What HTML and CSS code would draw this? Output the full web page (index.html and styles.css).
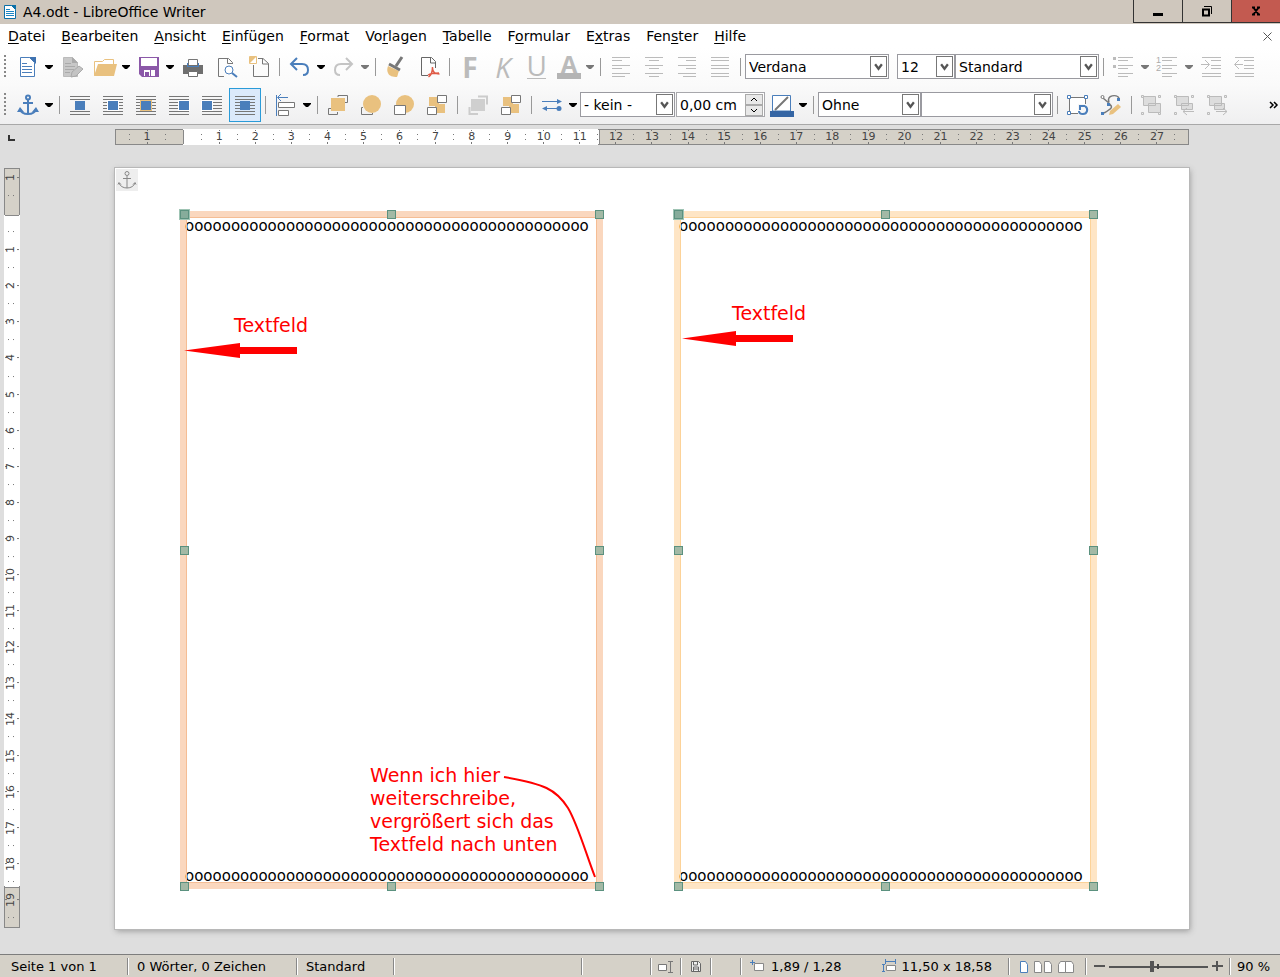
FILE: index.html
```html
<!DOCTYPE html>
<html lang="de">
<head>
	<meta charset="utf-8">
	<title>A4.odt - LibreOffice Writer</title>
	<link rel="stylesheet" href="styles.css">
</head>
<body>
	<!-- shared icons -->
	<svg class="sprite" aria-hidden="true">
		<symbol id="i-drop" viewBox="0 0 11 8"><path d="M1 2h8v1L6 6H4L1 3z" fill="currentColor"/></symbol>
		<symbol id="i-chevron" viewBox="0 0 8 8"><path d="M1 2l3 4 3-4" fill="none" stroke="#555" stroke-width="2"/></symbol>
		<symbol id="i-anchor" viewBox="0 0 24 24"><g fill="none" stroke="currentColor" stroke-width="2"><circle cx="12" cy="4.500" r="2"/><path d="M12 7v14M7 10h10M4 16c1 4 4 5 8 5s7-1 8-5"/></g><path d="M1 19l3-5 4 5zM16 19l4-5 3 5z" fill="currentColor"/></symbol>
		<symbol id="i-anchor-thin" viewBox="0 0 22 22"><g fill="none" stroke="currentColor"><circle cx="11" cy="4.500" r="2"/><path d="M11 7v12M7 9.500h8M3 14c1 3 4 5 8 5s7-2 8-5M2 15.500l1-2 2 2M20 15.500l-1-2-2 2"/></g></symbol>
		<symbol id="i-doc" viewBox="0 0 24 24"><path d="M4.500 2.500h9l5 5v14h-14z" fill="#fff" stroke="#4a7ebb"/><path d="M13 2h7v7z" fill="#3f72b0"/><path d="M6 8.500h5M6 11.500h10M6 14.500h10M6 17.500h10" stroke="#4a7ebb"/></symbol>
		<symbol id="i-lines" viewBox="0 0 24 24"><path d="M2 3.500h20M2 6.500h20M2 9.500h20M2 12.500h20M2 15.500h20M2 18.500h20M2 21.500h20" stroke="#777"/></symbol>
	</svg>

	<header class="titlebar">
		<svg width="14" height="16" viewBox="0 0 14 16"><path d="M1.500 1.500h7l4 4v9h-11z" fill="#fff" stroke="#0b70a8"/><path d="M8 1h5v5z" fill="#0b70a8"/><path d="M3 5.500h4M3 7.500h8M3 9.500h8M3 11.500h8" stroke="#1b86c4"/></svg>
		<h1>A4.odt - LibreOffice Writer</h1>
		<div class="win-buttons">
			<button aria-label="Minimieren"><svg width="12" height="12"><path d="M1 8h10v3H1z"/></svg></button>
			<button aria-label="Wiederherstellen"><svg width="12" height="12"><path d="M2 4.500h6v6H2z" fill="none" stroke="#000" stroke-width="2"/><path d="M3 1.500h7.500V9" fill="none" stroke="#000"/></svg></button>
			<button class="close" aria-label="Schließen"><svg width="12" height="12"><path d="M3 2l6 8M9 2l-6 8M2 2.500h3M7 2.500h3M2 9.500h3M7 9.500h3" stroke="#000" stroke-width="2"/></svg></button>
		</div>
	</header>

	<nav class="menubar">
		<a href="#"><u>D</u>atei</a>
		<a href="#"><u>B</u>earbeiten</a>
		<a href="#"><u>A</u>nsicht</a>
		<a href="#"><u>E</u>infügen</a>
		<a href="#"><u>F</u>ormat</a>
		<a href="#">Vo<u>r</u>lagen</a>
		<a href="#"><u>T</u>abelle</a>
		<a href="#">F<u>o</u>rmular</a>
		<a href="#">E<u>x</u>tras</a>
		<a href="#">Fen<u>s</u>ter</a>
		<a href="#"><u>H</u>ilfe</a>
		<button class="doc-close" aria-label="Dokument schließen"><svg width="9" height="9"><path d="M.5.5l8 8M8.500.5l-8 8" stroke="#555"/></svg></button>
	</nav>

	<!-- Standard -->
	<div class="toolbar">
		<i class="grip"></i>
		<div class="split">
			<button aria-label="Neu"><svg><use href="#i-doc"/></svg></button>
			<button class="drop" aria-label="Neu, Auswahl"><svg><use href="#i-drop"/></svg></button>
		</div>
		<button aria-label="Bearbeiten"><svg viewBox="0 0 24 24"><path d="M3.500 2.500h9l5 5v14h-14z" fill="#c8c8c8" stroke="#bbb"/><path d="M12 2v6h6z" fill="#aaa"/><path d="M5 8.500h6M5 11.500h10M5 14.500h9M5 17.500h5" stroke="#aaa"/><path d="M11 22l1-5 7-6 4 3-7 7z" fill="#c4c4c4" stroke="#aaa"/></svg></button>
		<div class="split">
			<button aria-label="Öffnen"><svg viewBox="0 0 24 24"><path d="M1.500 20.500v-14h8l2-2h9v5" fill="#fff" stroke="#e9c17f"/><path d="M1 21l4-12h19l-3 12z" fill="#e9c17f"/></svg></button>
			<button class="drop" aria-label="Öffnen, Auswahl"><svg><use href="#i-drop"/></svg></button>
		</div>
		<div class="split">
			<button aria-label="Speichern"><svg viewBox="0 0 24 24"><path d="M2 2h20v20H5l-3-3z" fill="#8b58a8"/><path d="M4 3h16v8H4zM7 15h11v6H7z" fill="#fff"/><path d="M8 17h4v4H8zM13 15h1v6h-1z" fill="#8b58a8"/></svg></button>
			<button class="drop" aria-label="Speichern, Auswahl"><svg><use href="#i-drop"/></svg></button>
		</div>
		<button aria-label="Drucken"><svg viewBox="0 0 24 24"><path d="M2 10h20v9H2z" fill="#6f6f6f"/><path d="M7.500 10V4.500h9V10" fill="#fff" stroke="#777"/><path d="M6 8h1v3h10V8h1v4H6z" fill="#4a7ebb"/><path d="M7.500 16.500h9v5h-9z" fill="#fff" stroke="#6f6f6f"/></svg></button>
		<button aria-label="Druckvorschau"><svg viewBox="0 0 24 24"><path d="M10 21.500H4.500v-18h10l4 4V9M13.500 3.500v5h5" fill="none" stroke="#777"/><circle cx="15" cy="15" r="4" fill="#fff" stroke="#4a7ebb"/><path d="M18 18l5 4" stroke="#4a7ebb" stroke-width="2"/></svg></button>
		<button aria-label="Vorlagen"><svg viewBox="0 0 24 24"><path d="M11 3.500h5l5.500 5v13h-15V10M15.500 4v5h6" fill="none" stroke="#777"/><path d="M2.500 1.500h7v7h-7z" fill="#fff" stroke="#e9c17f"/><path d="M3 8V2h6z" fill="#e9c17f"/></svg></button>
		<i class="sep"></i>
		<div class="split">
			<button aria-label="Rückgängig"><svg viewBox="0 0 24 24"><path d="M9 3L3 9l6 6M3 9h11c4 0 6 2 6 6s-2 5-5 5" fill="none" stroke="#4a7ebb" stroke-width="2"/></svg></button>
			<button class="drop" aria-label="Rückgängig, Auswahl"><svg><use href="#i-drop"/></svg></button>
		</div>
		<div class="split">
			<button disabled aria-label="Wiederherstellen"><svg viewBox="0 0 24 24"><path d="M14 3l6 6-6 6M20 9H9c-4 0-6 2-6 6s2 5 5 5" fill="none" stroke="#c4c4c4" stroke-width="2"/></svg></button>
			<button disabled class="drop" aria-label="Wiederherstellen, Auswahl"><svg><use href="#i-drop"/></svg></button>
		</div>
		<i class="sep"></i>
		<button aria-label="Format übertragen"><svg viewBox="0 0 24 24"><path d="M4 11l11 5c-1 2-1 4-2 6-4 0-8-1-9-4-1-2-1-4 0-7z" fill="#e9c17f"/><path d="M5 9l11 6M12 11l6-9" stroke="#777" stroke-width="3"/></svg></button>
		<button aria-label="Als PDF exportieren"><svg viewBox="0 0 24 24"><path d="M11 20.500H4.500v-18h10l4 4V13M13.500 3v5h5" fill="none" stroke="#666"/><path d="M15.500 12c0 5-1 8-4 10M15.500 13c0 4 2 6 7 6M11 20c3-2 7-2 11-2" fill="none" stroke="#df5a46" stroke-width="1.500"/></svg></button>
		<i class="sep"></i>
		<button disabled aria-label="Fett" class="letter"><b>F</b></button>
		<button disabled aria-label="Kursiv" class="letter"><i>K</i></button>
		<button disabled aria-label="Unterstrichen" class="letter line"><span>U</span></button>
		<div class="split">
			<button disabled aria-label="Schriftfarbe" class="letter bar"><b>A</b></button>
			<button disabled class="drop" aria-label="Schriftfarbe, Auswahl"><svg><use href="#i-drop"/></svg></button>
		</div>
		<i class="sep"></i>
		<button disabled aria-label="Linksbündig"><svg viewBox="0 0 24 24"><path d="M3 2.500h18M3 5.500h10M3 10.500h18M3 13.500h10M3 18.500h18M3 21.500h13" stroke="#bbb"/></svg></button>
		<button disabled aria-label="Zentriert"><svg viewBox="0 0 24 24"><path d="M3 2.500h18M7 5.500h10M3 10.500h18M7 13.500h10M3 18.500h18M7 21.500h10" stroke="#bbb"/></svg></button>
		<button disabled aria-label="Rechtsbündig"><svg viewBox="0 0 24 24"><path d="M3 2.500h18M11 5.500h10M3 10.500h18M11 13.500h10M3 18.500h18M8 21.500h13" stroke="#bbb"/></svg></button>
		<button disabled aria-label="Blocksatz"><svg viewBox="0 0 24 24"><path d="M3 2.500h18M3 5.500h18M3 10.500h18M3 13.500h18M3 18.500h18M3 21.500h18" stroke="#bbb"/></svg></button>
		<i class="sep"></i>
		<div class="combo w144"><select aria-label="Schriftname"><option>Verdana</option></select><svg><use href="#i-chevron"/></svg></div>
		<div class="combo w58 spaced"><select aria-label="Schriftgröße"><option>12</option></select><svg><use href="#i-chevron"/></svg></div>
		<div class="combo w144"><select aria-label="Absatzvorlage"><option>Standard</option></select><svg><use href="#i-chevron"/></svg></div>
		<i class="sep"></i>
		<div class="split">
			<button disabled aria-label="Aufzählung"><svg viewBox="0 0 24 24"><path d="M6 2.500h15M6 5.500h10M6 10.500h15M6 13.500h10M6 18.500h15M6 21.500h10" stroke="#bbb"/><path d="M1 2h3v3H1zM1 10h3v3H1z" fill="#bbb"/></svg></button>
			<button disabled class="drop" aria-label="Aufzählung, Auswahl"><svg><use href="#i-drop"/></svg></button>
		</div>
		<div class="split">
			<button disabled aria-label="Nummerierung"><svg viewBox="0 0 24 24"><path d="M6 2.500h15M6 5.500h10M6 10.500h15M6 13.500h10M6 18.500h15M6 21.500h10" stroke="#bbb"/><text x="0" y="8" font-size="9" fill="#aaa">1</text><text x="0" y="16" font-size="9" fill="#aaa">2</text></svg></button>
			<button disabled class="drop" aria-label="Nummerierung, Auswahl"><svg><use href="#i-drop"/></svg></button>
		</div>
		<button disabled aria-label="Einzug vergrößern"><svg viewBox="0 0 24 24"><path d="M2 2.500h19M11 5.500h10M11 10.500h10M11 13.500h10M2 18.500h19M2 21.500h19M1 9.500h8M5 5l4.500 4.500L5 14" fill="none" stroke="#bbb"/></svg></button>
		<button disabled aria-label="Einzug verkleinern"><svg viewBox="0 0 24 24"><path d="M2 2.500h19M11 5.500h10M11 10.500h10M11 13.500h10M2 18.500h19M2 21.500h19M2 9.500h8M6 5L1.500 9.500 6 14" fill="none" stroke="#bbb"/></svg></button>
	</div>

	<!-- Rahmen -->
	<div class="toolbar second">
		<i class="grip"></i>
		<div class="split">
			<button aria-label="Verankerung" class="blue"><svg><use href="#i-anchor"/></svg></button>
			<button class="drop" aria-label="Verankerung, Auswahl"><svg><use href="#i-drop"/></svg></button>
		</div>
		<i class="sep"></i>
		<button aria-label="Umlauf aus"><svg viewBox="0 0 24 24"><path d="M2 3.500h20M2 6.500h20M2 18.500h20M2 21.500h20" stroke="#777"/><path d="M7 8h10v9H7z" fill="#4a7ebb"/></svg></button>
		<button aria-label="Seitenumlauf"><svg viewBox="0 0 24 24"><use href="#i-lines"/><path d="M6 7h12v11H6z" fill="#fff"/><path d="M7 8h10v9H7z" fill="#4a7ebb"/></svg></button>
		<button aria-label="Dynamischer Seitenumlauf"><svg viewBox="0 0 24 24"><use href="#i-lines"/><path d="M6 7h12v11H6z" fill="#e9c17f"/><path d="M7 8h10v9H7z" fill="#4a7ebb"/></svg></button>
		<button aria-label="Umlauf links"><svg viewBox="0 0 24 24"><use href="#i-lines"/><path d="M11 7h12v11H11z" fill="#fff"/><path d="M12 8h10v9H12z" fill="#4a7ebb"/></svg></button>
		<button aria-label="Umlauf rechts"><svg viewBox="0 0 24 24"><use href="#i-lines"/><path d="M1 7h12v11H1z" fill="#fff"/><path d="M2 8h10v9H2z" fill="#4a7ebb"/></svg></button>
		<button aria-label="Durchlauf" aria-pressed="true"><svg viewBox="0 0 24 24"><use href="#i-lines"/><path d="M7 8h10v9H7z" fill="#4a7ebb"/></svg></button>
		<i class="sep"></i>
		<div class="split">
			<button aria-label="Ausrichten"><svg viewBox="0 0 24 24"><path d="M2.500 2v21M4 4.500h10M7 1L3.500 4.500 7 8" fill="none" stroke="#4a7ebb"/><path d="M4.500 9.500h16v5h-16zM4.500 17.500h10v5h-10z" fill="#fff" stroke="#777"/></svg></button>
			<button class="drop" aria-label="Ausrichten, Auswahl"><svg><use href="#i-drop"/></svg></button>
		</div>
		<i class="sep"></i>
		<button aria-label="Ganz nach vorn"><svg viewBox="0 0 24 24"><path d="M12 4V2.500h9.500v7H19M5 15.500H2.500v6h9V19" fill="none" stroke="#777"/><path d="M5 5h14v13H5z" fill="#e9c17f"/></svg></button>
		<button aria-label="Eins nach vorn"><svg viewBox="0 0 24 24"><path d="M4 14.500H2.500v7h11V20" fill="none" stroke="#777"/><circle cx="13" cy="11" r="9" fill="#e9c17f"/></svg></button>
		<button aria-label="Eins nach hinten"><svg viewBox="0 0 24 24"><circle cx="13" cy="11" r="9" fill="#e9c17f"/><path d="M2.500 12.500h11v9h-11z" fill="#fff" stroke="#777"/></svg></button>
		<button aria-label="Ganz nach hinten"><svg viewBox="0 0 24 24"><path d="M4 4h10v7h6v9H10v-7H4z" fill="#e9c17f"/><path d="M12.500 2.500h9v7h-9zM2.500 14.500h9v7h-9z" fill="#fff" stroke="#777"/></svg></button>
		<i class="sep"></i>
		<button disabled aria-label="In den Vordergrund"><svg viewBox="0 0 24 24"><path d="M12 3.500h9v8M3.500 14v7H12" fill="none" stroke="#ccc" stroke-width="2"/><path d="M5 6h14v12H5z" fill="#cfcfcf"/></svg></button>
		<button aria-label="In den Hintergrund"><svg viewBox="0 0 24 24"><path d="M4 4h10v7h6v9H10v-7H4z" fill="#e9c17f"/><path d="M12.500 2.500h9v7h-9zM2.500 14.500h9v7h-9z" fill="#fff" stroke="#777"/></svg></button>
		<i class="sep"></i>
		<div class="split">
			<button aria-label="Pfeilstil"><svg viewBox="0 0 24 24"><path d="M2 8.500h18M4 15.500h15" stroke="#4a7ebb"/><path d="M17 6l5 2.500-5 2.500zM7 13l-5 2.500L7 18z" fill="#4a7ebb"/><circle cx="19" cy="15.500" r="2.500" fill="#4a7ebb"/></svg></button>
			<button class="drop" aria-label="Pfeilstil, Auswahl"><svg><use href="#i-drop"/></svg></button>
		</div>
		<div class="combo w95"><select aria-label="Linienstil"><option>- kein -</option></select><svg><use href="#i-chevron"/></svg></div>
		<div class="spin">
			<input type="text" value="0,00 cm" aria-label="Linienbreite">
			<div class="spin-buttons">
				<button aria-label="Mehr"><svg width="8" height="5"><path d="M1 4l3-3 3 3" fill="none" stroke="#000"/></svg></button>
				<button aria-label="Weniger"><svg width="8" height="5"><path d="M1 1l3 3 3-3" fill="none" stroke="#000"/></svg></button>
			</div>
		</div>
		<div class="split">
			<button aria-label="Linienfarbe"><svg viewBox="0 0 24 24"><path d="M2.500 2.500h18V18h-18z" fill="#fff" stroke="#4a7ebb"/><path d="M5 17L18 4" stroke="#777" stroke-width="2"/><path d="M0 18h24v6H0z" fill="#3465a4"/></svg></button>
			<button class="drop" aria-label="Linienfarbe, Auswahl"><svg><use href="#i-drop"/></svg></button>
		</div>
		<i class="sep"></i>
		<div class="combo w103"><select aria-label="Flächenstil"><option>Ohne</option></select><svg><use href="#i-chevron"/></svg></div>
		<div class="combo w132"><select aria-label="Füllung"><option></option></select><svg><use href="#i-chevron"/></svg></div>
		<i class="sep"></i>
		<button aria-label="Drehen"><svg viewBox="0 0 24 24"><path d="M3.500 4.500h16v16h-16z" fill="#fff" stroke="#777"/><path d="M12 11h11v12H12z" fill="#f6f6f6"/><path d="M1.500 2.500h3v3h-3zM18.500 2.500h3v3h-3zM1.500 18.500h3v3h-3z" fill="#fff" stroke="#4a7ebb"/><path d="M19 13c4 3 2 8-2 8-2 0-4-1-4-3M14 17v-4h5" fill="none" stroke="#4a7ebb" stroke-width="2"/></svg></button>
		<button aria-label="Punkte"><svg viewBox="0 0 24 24"><path d="M4 5l7 6M10 9c-3-7 8-8 10-4M10 11c5 3 2 5-5 9" fill="none" stroke="#777" stroke-width="1.500"/><circle cx="3.500" cy="4" r="1.500" fill="#fff" stroke="#777"/><path d="M8 10h3v3H8zM18 5h3v3h-3zM2 19h3v3H2z" fill="#4a7ebb"/><path d="M10 22l1-4 8-7 3 3-8 7z" fill="#e9c17f"/></svg></button>
		<i class="sep"></i>
		<button disabled aria-label="Gruppieren"><svg viewBox="0 0 24 24"><path d="M3.500 3.500h12v9h-12zM8.500 10.500h12v9h-12z" fill="#ddd" stroke="#bbb"/><path d="M1.500 2.500h2v2h-2zM18.500 2.500h2v2h-2zM1.500 19.500h2v2h-2zM18.500 19.500h2v2h-2z" fill="#eee" stroke="#bbb"/></svg></button>
		<button disabled aria-label="Gruppierung aufheben"><svg viewBox="0 0 24 24"><path d="M3.500 3.500h12v9h-12zM8.500 10.500h11v6h-11z" fill="#ddd" stroke="#bbb"/><path d="M1.500 2.500h2v2h-2zM18.500 2.500h2v2h-2zM1.500 19.500h2v2h-2z" fill="#eee" stroke="#bbb"/><path d="M10 18.500h11M14 15l-4 3.500 4 3.500" fill="none" stroke="#bbb"/></svg></button>
		<button disabled aria-label="Gruppe bearbeiten"><svg viewBox="0 0 24 24"><path d="M3.500 3.500h12v9h-12zM8.500 10.500h10v6h-10z" fill="#ddd" stroke="#bbb"/><path d="M1.500 2.500h2v2h-2zM18.500 2.500h2v2h-2zM1.500 19.500h2v2h-2z" fill="#eee" stroke="#bbb"/><path d="M10 18.500h11M17 15l4 3.500-4 3.500" fill="none" stroke="#bbb"/></svg></button>
		<button class="more" aria-label="Weitere"><svg width="10" height="8"><path d="M1 1l3 3-3 3M5 1l3 3-3 3" fill="none" stroke="#000" stroke-width="1.500"/></svg></button>
	</div>

	<main class="work">
		<div class="corner"><svg width="8" height="6"><path d="M1 0v5h6" fill="none" stroke="#333" stroke-width="2"/></svg></div>
		<div class="ruler-row">
			<div class="ruler ruler-h" id="rulerH"></div>
		</div>
		<div class="ruler ruler-v" id="rulerV"></div>
		<div class="canvas">
			<article class="page">
				<span class="page-anchor"><svg><use href="#i-anchor-thin"/></svg></span>

				<section class="frame">
					<p>oooooooooooooooooooooooooooooooooooooooooooo</p>
					<div class="note note-left">
						<span>Textfeld</span>
						<svg width="113" height="15"><path d="M0 7.500L56 0v4h57v7H56v4z" fill="#f00"/></svg>
					</div>
					<div class="note note-text">Wenn ich hier<br>weiterschreibe,<br>vergrößert sich das<br>Textfeld nach unten</div>
					<svg class="curve" width="96" height="104"><path d="M1 1c40 7 52 12 64 31 10 17 18 46 27 69" fill="none" stroke="#f00" stroke-width="2"/></svg>
					<p>oooooooooooooooooooooooooooooooooooooooooooo</p>
					<i class="handle nw"></i><i class="handle n"></i><i class="handle ne"></i>
					<i class="handle w"></i><i class="handle e"></i>
					<i class="handle sw"></i><i class="handle s"></i><i class="handle se"></i>
				</section>

				<section class="frame light">
					<p>oooooooooooooooooooooooooooooooooooooooooooo</p>
					<div class="note note-right">
						<span>Textfeld</span>
						<svg width="113" height="15"><path d="M0 7.500L54 0v4h57v7H54v4z" fill="#f00"/></svg>
					</div>
					<p>oooooooooooooooooooooooooooooooooooooooooooo</p>
					<i class="handle nw"></i><i class="handle n"></i><i class="handle ne"></i>
					<i class="handle w"></i><i class="handle e"></i>
					<i class="handle sw"></i><i class="handle s"></i><i class="handle se"></i>
				</section>
			</article>
		</div>
	</main>

	<footer class="statusbar">
		<span>Seite 1 von 1</span>
		<span>0 Wörter, 0 Zeichen</span>
		<span>Standard</span>
		<span></span>
		<span></span>
		<span class="mid"><svg width="18" height="14"><path d="M1.500 4.500h8v6h-8z" fill="#fff" stroke="#777"/><path d="M11 1.500h5M11 12.500h5M13.500 2v10" stroke="#777"/></svg></span>
		<span class="mid"><svg width="12" height="14"><path d="M1.500 1.500h7l2 2v8h-9z" fill="#eee" stroke="#666"/><path d="M3.500 2v3h4V2M3.500 11V7h5v4M4 9h4" fill="none" stroke="#666"/></svg></span>
		<span></span>
		<span class="pos">
			<svg width="16" height="16"><path d="M4.500 4.500h9v7h-9z" fill="#fff" stroke="#888"/><path d="M0 3.500h5M2.500 1v5" stroke="#4a7ebb"/></svg>
			<b>1,89 / 1,28</b>
			<svg width="16" height="16"><path d="M5.500 6.500h9v5h-9z" fill="#fff" stroke="#888"/><path d="M5 2.500h9M4.500 0v5M14.500 0v5M2.500 6v6M1 5.500h3M1 12.500h3" stroke="#4a7ebb"/></svg>
			<b>11,50 x 18,58</b>
		</span>
		<span class="views">
			<button aria-label="Einzelseite"><svg width="9" height="12"><path d="M.5.5h5l2 3v8h-7z" fill="#fff" stroke="#4a7ebb"/></svg></button>
			<button aria-label="Mehrere Seiten"><svg width="19" height="12"><path d="M.5.5h5l2 3v8h-7zM10.500.5h5l2 3v8h-7z" fill="#fff" stroke="#888"/></svg></button>
			<button aria-label="Buchansicht"><svg width="17" height="12"><path d="M.5 3.500l2-3h5v11h-7zM7.500.5h6l2 3v8h-8z" fill="#fff" stroke="#888"/></svg></button>
		</span>
		<span class="zoom">
			<button aria-label="Verkleinern"><svg width="11" height="11"><path d="M0 5h11" stroke="#555" stroke-width="2"/></svg></button>
			<input type="range" min="0" max="100" value="43" aria-label="Maßstab">
			<button aria-label="Vergrößern"><svg width="11" height="11"><path d="M0 5h11M5 0v10" stroke="#555" stroke-width="2"/></svg></button>
		</span>
		<span class="percent">90 %</span>
	</footer>

	<script>
	// one cell for each half centimetre: numbers on the whole ones, dots between
	function fillRuler(id, from, to){
		var ruler = document.getElementById(id);
		for (var n = from; n <= to; n += 0.5) {
			var cell = document.createElement('span');
			if (n % 1 != 0) {
				cell.className = "dots";
			}
			else if (n != 0) {
				cell.innerText = Math.abs(n);
				cell.className = "tick";
			}
			ruler.appendChild(cell);
		}
	}
	fillRuler('rulerH', -1.5, 27.5);
	fillRuler('rulerV', -1, 19.5);
	</script>
</body>
</html>
```
FILE: styles.css
```css
* {
	box-sizing: border-box;
}
body {
	margin: 0;
	min-height: 100vh;
	display: flex;
	flex-direction: column;
	font: 14px "DejaVu Sans", Verdana, sans-serif;
	color: #000;
	background: #dedede;
}
button {
	border: 0;
	padding: 0;
	background: none;
	display: flex;
	align-items: center;
	justify-content: center;
}
.sprite {
	display: none;
}

/* title bar */
.titlebar {
	height: 24px;
	display: flex;
	align-items: center;
	gap: 6px;
	padding-left: 3px;
	background: #cfc7bd;
}
.titlebar h1 {
	flex: 1;
	margin: 0;
	font-size: 14px;
	font-weight: normal;
}
.win-buttons {
	display: flex;
	align-self: flex-start;
}
.win-buttons button {
	width: 49px;
	height: 23px;
	border: 1px solid #333;
	border-width: 0 0 1px 1px;
}
.win-buttons .close {
	background: #c35a50;
}

/* menu */
.menubar {
	height: 24px;
	display: flex;
	align-items: center;
	gap: 16px;
	padding: 0 8px;
	background: #fff;
}
.menubar a {
	color: #000;
	text-decoration: none;
}
.menubar u {
	text-underline-offset: 2px;
}
.doc-close {
	margin-left: auto;
}

/* toolbars */
.toolbar {
	height: 37px;
	display: flex;
	align-items: center;
	gap: 1px;
	padding-left: 4px;
	background: linear-gradient(#fff, #fafafa);
}
.toolbar.second {
	height: 40px;
	background: linear-gradient(#fafafa, #efeff0);
	border-bottom: 1px solid #a8a8a8;
}
.toolbar button {
	width: 32px;
	height: 34px;
	flex: none;
}
.toolbar button > svg {
	width: 24px;
	height: 24px;
}
.toolbar .blue {
	color: #4a7ebb;
}
.toolbar [aria-pressed="true"] {
	background: #dbe9fb;
	border: 1px solid #2a9bd8;
}
.split {
	display: flex;
}
.toolbar .drop {
	width: 11px;
	color: #000;
}
.toolbar .drop:disabled {
	color: #777;
}
.toolbar .drop svg {
	width: 11px;
	height: 8px;
}
.toolbar .letter {
	color: #bbb;
	font: 28px/24px "Open Sans", sans-serif;
}
.letter > * {
	display: block;
	width: 24px;
	height: 24px;
}
.letter.line > span {
	width: 19px;
	border-bottom: 1px solid #bbb;
	line-height: 20px;
}
.letter.bar > b {
	border-bottom: 6px solid #b4b4b4;
	font-size: 24px;
	line-height: 18px;
}
.grip {
	width: 7px;
	height: 23px;
	flex: none;
	background: repeating-linear-gradient(#888 0 2px, transparent 2px 4px) no-repeat;
	background-size: 2px 100%;
}
.sep {
	width: 7px;
	height: 18px;
	flex: none;
	background: linear-gradient(#999, #999) no-repeat center;
	background-size: 1px 100%;
}
.combo {
	position: relative;
	height: 25px;
	flex: none;
}
.combo + .combo {
	margin-left: -1px;
}
.combo.spaced {
	margin-left: 7px;
}
.w58 { width: 58px; }
.w95 { width: 95px; }
.w103 { width: 103px; }
.w132 { width: 132px; }
.w144 { width: 144px; }
.combo select {
	appearance: none;
	width: 100%;
	height: 100%;
	padding: 0 20px 0 3px;
	border: 1px solid #9a9aa0;
	border-radius: 0;
	background: #fff;
	color: #000;
	font: inherit;
}
.combo svg {
	position: absolute;
	top: 2px;
	right: 2px;
	width: 17px;
	height: 21px;
	padding: 5px 3px;
	border: 1px solid #777;
	pointer-events: none;
}
.spin {
	width: 89px;
	height: 25px;
	flex: none;
	display: flex;
	padding: 1px;
	border: 1px solid #a8a8ac;
	background: #fff;
}
.spin input {
	flex: 1;
	min-width: 0;
	border: 0;
	padding: 0 0 0 2px;
	background: none;
	font: inherit;
}
.spin-buttons {
	width: 18px;
}
.spin-buttons button {
	width: 18px;
	height: 11px;
	background: #e8e8e8;
	border: 1px solid #aaa;
}
.spin-buttons button > svg {
	width: 8px;
	height: 5px;
}
.toolbar .more {
	width: 12px;
	margin-left: auto;
}
.toolbar .more svg {
	width: 10px;
	height: 8px;
}

/* rulers and document */
.work {
	flex: 1;
	display: grid;
	grid-template: 43px 1fr / 20px 1fr;
}
.corner {
	padding: 8px;
	line-height: 6px;
}
.ruler-row {
	padding: 4px 2px 0 6px;
	display: flex;
	justify-content: center;
}
.ruler {
	display: grid;
	color: #444;
	font-size: 11px;
}
.ruler span {
	display: flex;
	align-items: center;
	justify-content: center;
	min-width: 0;
	min-height: 0;
}
/* two small dots halfway between the numbers */
.ruler .dots::before {
	content: "";
	width: 1px;
	height: 4px;
	border: solid #777;
	border-width: 1px 0;
}
.ruler-v .dots::before {
	width: 4px;
	height: 1px;
	border-width: 0 1px;
}
.ruler-h {
	width: 1074px;
	height: 16px;
	padding: 0 4px 0 5px;
	line-height: 12px;
	grid-auto-flow: column;
	grid-auto-columns: 1fr;
	border: 1px solid #888;
	border-width: 1px 1px 1px 0;
	border-image: linear-gradient(90deg, #888 69px, #fff 69px 484px, #888 484px) 1;
	background: linear-gradient(90deg, #888 1px, #d5d1c8 1px 68px, #888 68px 69px, #fff 69px 484px, #888 484px 485px, #d5d1c8 485px);
}
.ruler-h .tick {
	background: linear-gradient(#777 1px, transparent 1px 12px, #777 12px) no-repeat center;
	background-size: 1px 100%;
}
.ruler-v {
	align-self: start;
	width: 16px;
	height: 760px;
	margin-left: 4px;
	grid-auto-rows: 1fr;
	border: 1px solid #888;
	border-image: linear-gradient(#888 47px, #fff 47px 718px, #888 718px) 1;
	background: linear-gradient(#d5d1c8 46px, #888 46px 47px, #fff 47px 718px, #888 718px 719px, #d5d1c8 719px);
}
.ruler-v span {
	writing-mode: vertical-rl;
	transform: rotate(180deg);
	line-height: 12px;
	padding-left: 2px;
}
.ruler-v .tick {
	background: linear-gradient(90deg, #777 2px, transparent 2px 12px, #777 12px) no-repeat center;
	background-size: 100% 1px;
}
.canvas {
	display: flex;
	justify-content: center;
	align-items: flex-start;
	padding: 0 0 24px 4px;
}
.page {
	position: relative;
	width: 1074px;
	height: 761px;
	display: flex;
	align-items: flex-start;
	gap: 71px;
	padding: 43px 0 0 65px;
	background: #fff;
	box-shadow: 0 0 0 1px #b8b8b8, 1px 2px 6px #999;
}
.page-anchor {
	position: absolute;
	top: 1px;
	left: 1px;
	width: 22px;
	height: 22px;
	color: #888;
	background: #eee;
}
.page-anchor svg {
	display: block;
	width: 22px;
	height: 22px;
}
.frame {
	position: relative;
	width: 423px;
	height: 678px;
	display: flex;
	flex-direction: column;
	justify-content: space-between;
	padding-top: 2px;
	border: 7px solid #fad7be;
	outline: 1px solid #f5bd94;
	outline-offset: -7px;
}
.frame.light {
	border-color: #fee5c5;
	outline-color: #fcd298;
}
.frame p {
	margin: 0 -2px;
	font-size: 15px;
	line-height: 12px;
	white-space: nowrap;
}
.note {
	position: absolute;
	color: #f00;
	font-size: 19px;
	line-height: 23px;
}
.note span {
	display: block;
	margin: 0 0 6px 50px;
}
.note svg {
	display: block;
}
.note-left {
	top: 96px;
	left: -3px;
}
.note-right {
	top: 84px;
	left: 1px;
}
.note-text {
	top: 546px;
	left: 183px;
}
.curve {
	position: absolute;
	top: 558px;
	left: 316px;
}
.handle {
	position: absolute;
	width: 9px;
	height: 9px;
	background: #a3b9a5;
	border: 1px solid #5b917f;
}
.nw, .n, .ne { top: -8px; }
.w, .e { top: 328px; }
.sw, .s, .se { bottom: -9px; }
.nw, .w, .sw { left: -7px; }
.n, .s { left: 200px; }
.ne, .e, .se { right: -8px; }
.nw {
	background: #86ac9b;
	outline: 1px solid #9fc4b4;
}

/* status bar */
.statusbar {
	height: 23px;
	display: grid;
	grid-template-columns: 128px 169px 97px 1fr 69px 30px 30px 30px 268px 77px 144px 50px;
	padding: 3px 0 2px;
	border-top: 1px solid #7d7d7d;
	background: #d5d1c8;
	font-size: 13px;
}
.statusbar > span {
	display: flex;
	align-items: center;
	padding-left: 9px;
	border-right: 1px solid #888;
	box-shadow: 1px 0 #fff;
	white-space: nowrap;
}
.statusbar > span:first-child {
	padding-left: 11px;
}
.statusbar > .mid {
	padding: 0;
	justify-content: center;
}
.statusbar b {
	font-weight: normal;
}
.pos {
	gap: 5px;
}
.pos b + svg {
	margin-left: 34px;
}
.views {
	gap: 5px;
}
.statusbar > .views {
	padding-left: 11px;
}
.zoom {
	gap: 4px;
}
.zoom input {
	appearance: none;
	flex: 1;
	min-width: 0;
	height: 13px;
	margin: 0;
	background:
		linear-gradient(#444, #444) 48px center / 2px 5px no-repeat,
		linear-gradient(#555, #555) center / 100% 2px no-repeat;
}
.statusbar > .zoom {
	padding: 0 6px 0 8px;
}
.zoom input::-webkit-slider-thumb {
	appearance: none;
	width: 4px;
	height: 11px;
	background: #555;
}
.statusbar > .percent {
	padding-left: 7px;
	border: 0;
	box-shadow: none;
}
```
